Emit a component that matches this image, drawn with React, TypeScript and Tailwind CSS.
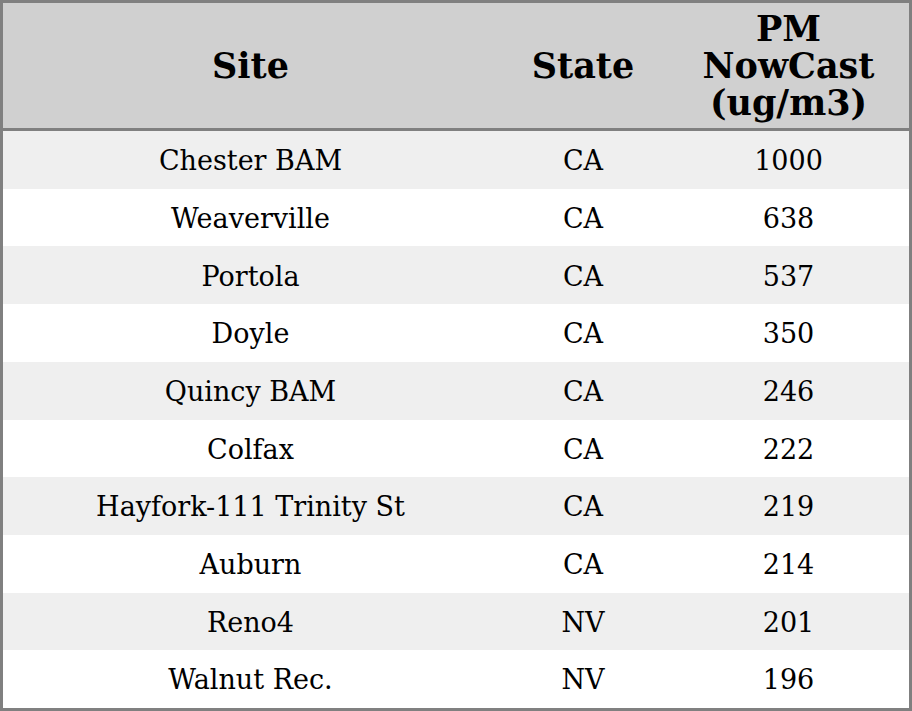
const rows = [
  { site: 'Chester BAM', state: 'CA', pm: '1000' },
  { site: 'Weaverville', state: 'CA', pm: '638' },
  { site: 'Portola', state: 'CA', pm: '537' },
  { site: 'Doyle', state: 'CA', pm: '350' },
  { site: 'Quincy BAM', state: 'CA', pm: '246' },
  { site: 'Colfax', state: 'CA', pm: '222' },
  { site: 'Hayfork-111 Trinity St', state: 'CA', pm: '219' },
  { site: 'Auburn', state: 'CA', pm: '214' },
  { site: 'Reno4', state: 'NV', pm: '201' },
  { site: 'Walnut Rec.', state: 'NV', pm: '196' }
];

export default function App() {
  return (
    <div className="w-[912px] h-[711px] bg-white font-['DejaVu_Serif',serif] text-black">
      <div className="flex flex-col h-full border-[3px] border-[#808080]">
        {/* Header */}
        <div className="flex h-[128px] shrink-0 bg-[#d0d0d0] border-b-[3px] border-[#808080] font-bold text-[35px] leading-[37px]">
          <div className="w-[495px] flex items-center justify-center">Site</div>
          <div className="w-[170px] flex items-center justify-center">State</div>
          <div className="flex-1 flex items-center justify-center text-center">
            PM<br />NowCast<br />(ug/m3)
          </div>
        </div>

        {/* Rows */}
        {rows.map((r, i) => (
          <div
            key={r.site}
            className={`flex flex-1 items-center pt-[3px] text-[27px] ${i % 2 === 0 ? 'bg-[#efefef]' : 'bg-white'}`}
          >
            <div className="w-[495px] text-center">{r.site}</div>
            <div className="w-[170px] text-center">{r.state}</div>
            <div className="flex-1 text-center">{r.pm}</div>
          </div>
        ))}
      </div>
    </div>
  );
}
